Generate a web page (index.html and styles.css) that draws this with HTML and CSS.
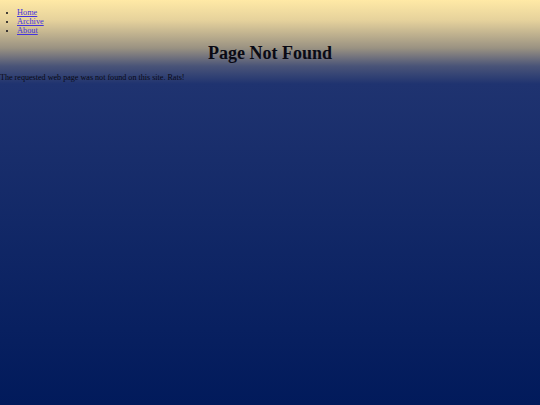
FILE: index.html
```html
<!DOCTYPE html>
<html>
<head>
<meta charset="utf-8">
<link rel="stylesheet" href="styles.css">
</head>
<body>
<ul class="nav">
<li><a href="#">Home</a></li>
<li><a href="#">Archive</a></li>
<li><a href="#">About</a></li>
</ul>
<h1 class="title">Page Not Found</h1>
<p class="msg">The requested web page was not found on this site. Rats!</p>
</body>
</html>
```
FILE: styles.css
```css
html {
  min-height: 100%;
  background: linear-gradient(to bottom, #ffe9a6 0px, #e6d29c 20px, #9a9282 48px, #4a5478 66px, #1f3370 84px, #011a5b 405px);
}
body {
  margin: 0;
  font-family: "Liberation Serif", serif;
  font-size: 8px;
  line-height: 9px;
  color: #0a0a14;
}
.nav {
  margin: 8px 0 0 0;
  padding: 0 0 0 17px;
}
.nav li {
  font-size: 8.3px;
}
.nav a {
  color: #4433dd;
}
.title {
  margin: 8px 0 0 0;
  text-align: center;
  font-size: 18px;
  line-height: 20px;
  font-weight: bold;
}
.msg {
  margin: 10px 0 0 0;
  font-size: 8.1px;
}
```
